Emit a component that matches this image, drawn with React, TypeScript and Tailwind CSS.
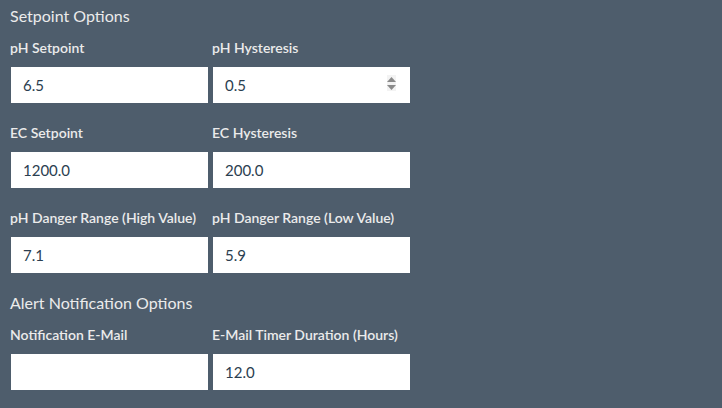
import React from "react"

type Field = { label: string; value: string; spinner?: boolean }

const SECTIONS: { title: string; rows: Field[][] }[] = [
    {
        title: "Setpoint Options",
        rows: [
            [{ label: "pH Setpoint", value: "6.5" }, { label: "pH Hysteresis", value: "0.5", spinner: true }],
            [{ label: "EC Setpoint", value: "1200.0" }, { label: "EC Hysteresis", value: "200.0" }],
            [{ label: "pH Danger Range (High Value)", value: "7.1" }, { label: "pH Danger Range (Low Value)", value: "5.9" }],
        ],
    },
    {
        title: "Alert Notification Options",
        rows: [
            [{ label: "Notification E-Mail", value: "" }, { label: "E-Mail Timer Duration (Hours)", value: "12.0" }],
        ],
    },
]

const Spinner = () => (
    <div className="absolute right-[14px] top-[8px] flex h-[16px] w-[9px] flex-col items-center justify-center gap-[3px] bg-[#f3f3f3]">
        <svg width="9" height="5" viewBox="0 0 9 5"><path d="M4.5 0 L9 5 L0 5 Z" fill="#8a8a8a" /></svg>
        <svg width="9" height="5" viewBox="0 0 9 5"><path d="M0 0 L9 0 L4.5 5 Z" fill="#8a8a8a" /></svg>
    </div>
)

const FieldBox = ({ field }: { field: Field }) => (
    <div className="flex flex-col">
        <label className="h-[19px] text-[14px] font-semibold leading-[19px] text-[#ebebeb]">{field.label}</label>
        <div className="relative ml-px mt-[10px] h-[36px] w-[197px] bg-white">
            <input
                readOnly
                value={field.value}
                className="h-full w-full bg-transparent pl-[12px] text-[15px] text-[#2b3e50] outline-none"
                style={{ fontFamily: "Lato, sans-serif" }}
            />
            {field.spinner && <Spinner />}
        </div>
    </div>
)

export default function App() {
    return (
        <div className="h-[408px] w-[722px] bg-[#4e5d6c] pl-[10px] pt-[6px]" style={{ fontFamily: "Lato, 'Noto Sans', sans-serif" }}>
            {SECTIONS.map((section, i) => (
                <div key={section.title} className={i > 0 ? "mt-[20px]" : ""}>
                    <h2 className="h-[20px] text-[16px] leading-[20px] text-[#ebebeb]">{section.title}</h2>
                    {section.rows.map((row, j) => (
                        <div key={j} className={`grid grid-cols-[202px_202px] ${j === 0 ? "mt-[12px]" : "mt-[20px]"}`}>
                            {row.map((f) => <FieldBox key={f.label} field={f} />)}
                        </div>
                    ))}
                </div>
            ))}
        </div>
    )
}
